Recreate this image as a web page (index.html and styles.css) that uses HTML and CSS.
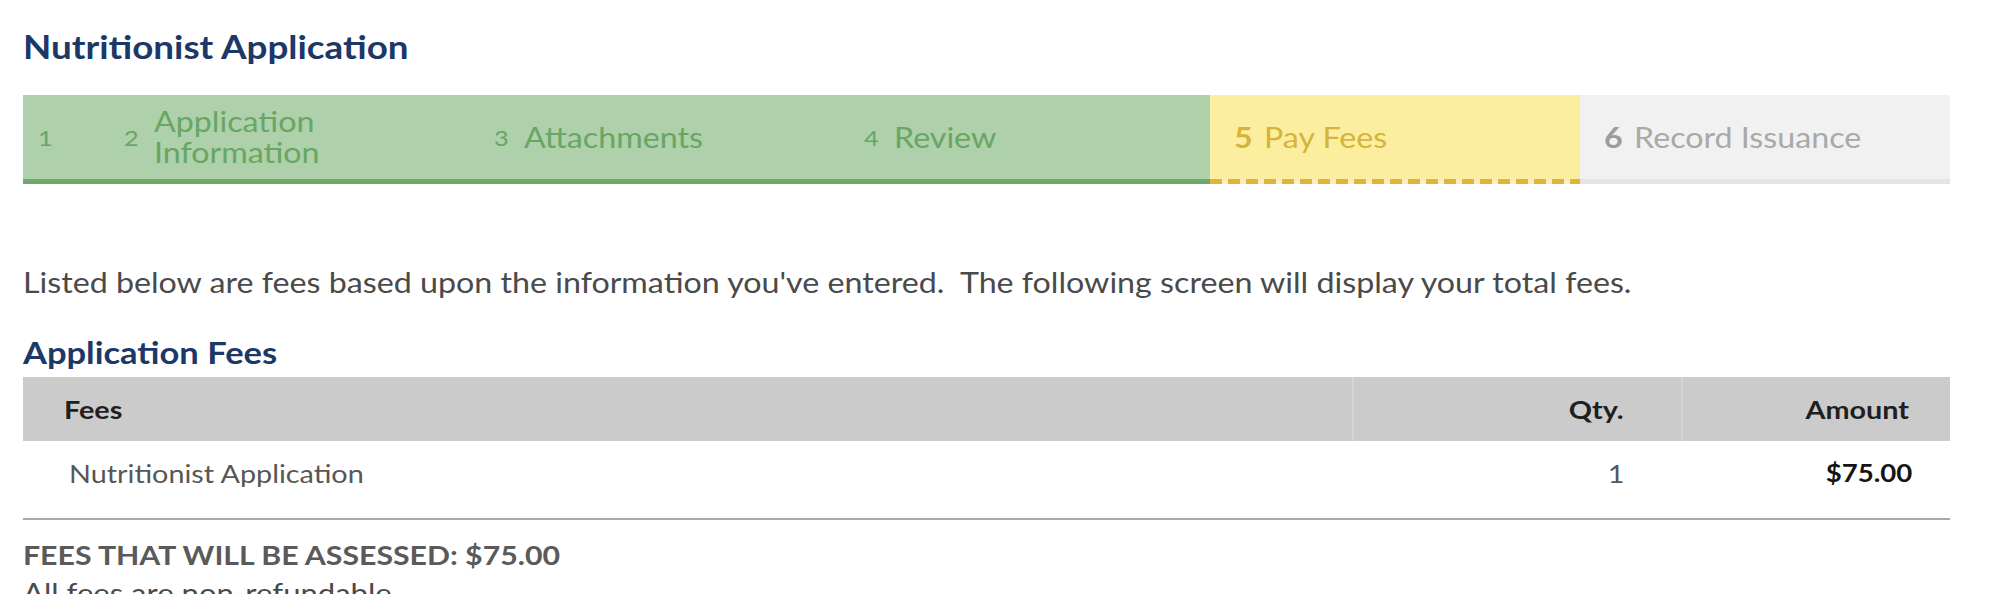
FILE: index.html
```html
<!DOCTYPE html>
<html lang="en">
<head>
<meta charset="utf-8">
<title>Nutritionist Application</title>
<link rel="stylesheet" href="styles.css">
</head>
<body>
<div class="page">
  <h1 class="page-title"><span class="sx">Nutritionist Application</span></h1>

  <div class="steps">
    <div class="step step-done step-first"><span class="step-num sx">1</span></div>
    <div class="step step-done"><span class="step-num sx">2</span><span class="step-label sx">Application<br>Information</span></div>
    <div class="step step-done"><span class="step-num sx">3</span><span class="step-label sx">Attachments</span></div>
    <div class="step step-done"><span class="step-num sx">4</span><span class="step-label sx">Review</span></div>
    <div class="step step-current"><span class="step-num sx">5</span><span class="step-label sx">Pay Fees</span></div>
    <div class="step step-todo"><span class="step-num sx">6</span><span class="step-label sx">Record Issuance</span></div>
  </div>

  <p class="intro"><span class="sx">Listed below are fees based upon the information you've entered.&nbsp; The following screen will display your total fees.</span></p>

  <h2 class="section-title"><span class="sx">Application Fees</span></h2>
  <table class="fees">
    <thead>
      <tr>
        <th class="col-fee"><span class="sx">Fees</span></th>
        <th class="col-qty"><span class="sx-r">Qty.</span></th>
        <th class="col-amt"><span class="sx-r">Amount</span></th>
      </tr>
    </thead>
    <tbody>
      <tr>
        <td class="col-fee"><span class="sx">Nutritionist Application</span></td>
        <td class="col-qty"><span class="sx-r">1</span></td>
        <td class="col-amt amt"><span class="sx-r">$75.00</span></td>
      </tr>
    </tbody>
  </table>

  <div class="total"><span class="sx">FEES THAT WILL BE ASSESSED: $75.00</span></div>
  <div class="note"><span class="sx">All fees are non-refundable.</span></div>
</div>
</body>
</html>
```

FILE: styles.css
```css
html, body {
  margin: 0;
  padding: 0;
  background: #ffffff;
}

body {
  font-family: "Lato", "Open Sans", "Liberation Sans", sans-serif;
  color: #4a4a4a;
}

/* the reference type is set slightly wide */
.sx,
.sx-r {
  display: inline-block;
  transform: scaleX(1.15);
  white-space: nowrap;
}

.sx { transform-origin: left center; }
.sx-r { transform-origin: right center; }

.page {
  width: 1927px;
  padding-left: 23px;
}

.page-title {
  margin: 0;
  padding-top: 28px;
  font-size: 32px;
  line-height: 38px;
  font-weight: 700;
  color: #1c3868;
}

/* step bar */
.steps {
  display: flex;
  margin-top: 29px;
  height: 89px;
}

.step {
  flex: 1 1 0;
  display: flex;
  align-items: center;
  padding-left: 24px;
  box-sizing: border-box;
  border-bottom: 5px solid transparent;
}

.step-first {
  flex: 0 0 77px;
  padding-left: 15px;
}

.step-num {
  font-size: 22px;
  margin-right: 17px;
}

.step-label {
  font-size: 28px;
  line-height: 31px;
}

.step-done {
  background: #aed0aa;
  border-bottom-color: #6ea969;
  color: #68a664;
}

.step-current {
  background:
    linear-gradient(#fcee9f, #fcee9f) padding-box,
    repeating-linear-gradient(90deg, #dcb53a 0 12px, #f7efcc 12px 18px) border-box;
  color: #d6b33a;
}

.step-todo {
  background: #f1f1f1;
  border-bottom-color: #e4e4e4;
  color: #a9a9a9;
}

.step-current .step-num,
.step-todo .step-num {
  font-size: 28px;
  font-weight: 700;
  margin-right: 14px;
}

.step-todo .step-num {
  color: #9c9c9c;
}

/* intro text */
.intro {
  margin: 81px 0 0;
  font-size: 28px;
  line-height: 34px;
  color: #4a4a4a;
}

.section-title {
  margin: 35px 0 0;
  font-size: 30px;
  line-height: 36px;
  font-weight: 700;
  color: #1c3868;
}

/* fee table */
.fees {
  width: 1927px;
  margin-top: 7px;
  border-collapse: collapse;
  table-layout: fixed;
}

.fees th,
.fees td {
  box-sizing: border-box;
  padding: 0;
}

.fees th {
  height: 64px;
  background: #cbcbcb;
  font-size: 25px;
  font-weight: 700;
  color: #1f1f1f;
  text-align: left;
  vertical-align: middle;
}

.fees td {
  height: 78px;
  padding-top: 17px;
  vertical-align: top;
  font-size: 25px;
  line-height: 30px;
  color: #575757;
  border-bottom: 2px solid #a9a9a9;
}

.fees th.col-fee { padding-left: 41px; }
.fees td.col-fee { padding-left: 46px; }

.col-fee { width: 1330px; }

.fees .col-qty {
  width: 329px;
  text-align: right;
  padding-right: 57px;
}

.fees .col-amt {
  width: 268px;
  text-align: right;
  padding-right: 41px;
}

.fees td.col-amt {
  padding-right: 38px;
}

.fees th.col-qty,
.fees th.col-amt {
  border-left: 2px solid #d5d5d5;
}

.fees td.amt {
  font-size: 24px;
  font-weight: 700;
  color: #151515;
}

.total {
  margin-top: 20px;
  font-size: 26.3px;
  line-height: 30px;
  font-weight: 700;
  color: #5a5a5a;
}

.note {
  margin-top: 11px;
  font-size: 27px;
  line-height: 24px;
  color: #4a4a4a;
}
```
